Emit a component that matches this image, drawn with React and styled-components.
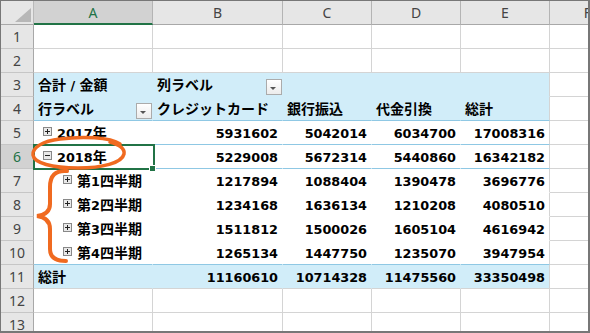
import React from "react";
import styled, { createGlobalStyle } from "styled-components";

const GREEN = "#217346";
const PIVOT = "#d1edf9";
const PIVOT_LINE = "#8fc8e4";
const GRID = "#d4d4d4";
const MARK = "#f06a20";

const GlobalStyle = createGlobalStyle`
  html, body {
    margin: 0;
    padding: 0;
    background: #fff;
  }
`;

const Frame = styled.div`
  position: relative;
  width: 590px;
  height: 333px;
  box-sizing: border-box;
  border: solid #777;
  border-width: 1px 2px 2px 1px;
  overflow: hidden;
  font-family: "Noto Sans CJK JP", sans-serif;
`;

const Sheet = styled.div`
  display: grid;
  grid-template-columns: 33px 119px 130px 89px 89px 89px 76px;
  grid-auto-rows: 24px;
`;

const Corner = styled.div`
  position: relative;
  box-sizing: border-box;
  background: #e6e6e6;
  border-right: 1px solid #b9b9b9;
  border-bottom: 1px solid #a8a8a8;

  &::after {
    content: "";
    position: absolute;
    right: 2px;
    bottom: 2px;
    border-left: 16px solid transparent;
    border-bottom: 14px solid #b7b7b7;
  }
`;

const ColHead = styled.div`
  display: flex;
  align-items: center;
  justify-content: center;
  box-sizing: border-box;
  background: ${({ $sel }) => ($sel ? "#d2d2d2" : "#e6e6e6")};
  color: ${({ $sel }) => ($sel ? GREEN : "#444")};
  border-right: 1px solid #b4b4b4;
  border-bottom: ${({ $sel }) => ($sel ? `2px solid ${GREEN}` : "1px solid #a8a8a8")};
  font: 14px "Noto Sans", sans-serif;
`;

const RowHead = styled.div`
  display: flex;
  align-items: center;
  justify-content: center;
  box-sizing: border-box;
  background: ${({ $sel }) => ($sel ? "#d2d2d2" : "#e6e6e6")};
  color: ${({ $sel }) => ($sel ? GREEN : "#444")};
  border-right: 1px solid #a8a8a8;
  border-bottom: 1px solid #c6c6c6;
  font: 14px "Noto Sans", sans-serif;
`;

const bgOf = (tone) => (tone === "pivot" ? PIVOT : "#fff");

const Cell = styled.div`
  display: flex;
  align-items: center;
  justify-content: ${({ $align }) =>
    $align === "right" ? "flex-end" : $align === "split" ? "space-between" : "flex-start"};
  gap: 5px;
  box-sizing: border-box;
  padding: 0 ${({ $padR = 4 }) => $padR}px 2px ${({ $indent = 4 }) => $indent}px;
  background: ${({ $tone }) => bgOf($tone)};
  border-right: 1px solid
    ${({ $tone, $edge }) => ($tone === "grid" || $edge ? GRID : bgOf($tone))};
  border-bottom: 1px solid
    ${({ $rule, $tone }) =>
      $rule === "blue" ? PIVOT_LINE : $rule === "grid" ? GRID : bgOf($tone)};
  color: #000;
  font-size: 14px;
  font-weight: 700;
  white-space: nowrap;
`;

const Text = styled.span`
  font-family: "Noto Sans CJK JP", sans-serif;
`;

const Latin = styled.span`
  font-family: "DejaVu Sans", sans-serif;
  font-size: 12.8px;
`;

const FilterButton = styled.span`
  flex: none;
  align-self: flex-end;
  margin-bottom: -1px;
  width: 16px;
  height: 16px;
  box-sizing: border-box;
  border: 1px solid #ababab;
  background: linear-gradient(#ffffff, #ececec);

  svg {
    display: block;
  }
`;

const ToggleSvg = styled.svg`
  flex: none;
  display: block;
`;

const Selection = styled.div`
  position: absolute;
  left: 32px;
  top: 143px;
  width: 122px;
  height: 26px;
  box-sizing: border-box;
  border: 2px solid ${GREEN};
  pointer-events: none;
`;

const FillHandle = styled.div`
  position: absolute;
  right: -3px;
  bottom: -4px;
  width: 7px;
  height: 7px;
  box-sizing: border-box;
  background: ${GREEN};
  border: 1px solid #fff;
`;

const Annotation = styled.svg`
  position: absolute;
  left: -1px;
  top: -1px;
  width: 590px;
  height: 333px;
  pointer-events: none;
`;

const COLS = ["A", "B", "C", "D", "E", "F"];

const ROWS = [
  { n: 1 },
  { n: 2 },
  {
    n: 3,
    kind: "head",
    rule: "none",
    cells: [{ text: "合計 / 金額" }, { text: "列ラベル", filter: true }, {}, {}, {}],
  },
  {
    n: 4,
    kind: "head",
    rule: "blue",
    cells: [
      { text: "行ラベル", filter: true },
      { text: "クレジットカード" },
      { text: "銀行振込" },
      { text: "代金引換" },
      { text: "総計" },
    ],
  },
  { n: 5, kind: "body", rule: "blue", label: "2017年", level: 0, values: [5931602, 5042014, 6034700, 17008316] },
  { n: 6, kind: "body", rule: "blue", label: "2018年", level: 0, open: true, values: [5229008, 5672314, 5440860, 16342182] },
  { n: 7, kind: "body", rule: "none", label: "第1四半期", level: 1, values: [1217894, 1088404, 1390478, 3696776] },
  { n: 8, kind: "body", rule: "none", label: "第2四半期", level: 1, values: [1234168, 1636134, 1210208, 4080510] },
  { n: 9, kind: "body", rule: "none", label: "第3四半期", level: 1, values: [1511812, 1500026, 1605104, 4616942] },
  { n: 10, kind: "body", rule: "blue", label: "第4四半期", level: 1, values: [1265134, 1447750, 1235070, 3947954] },
  { n: 11, kind: "total", rule: "grid", label: "総計", values: [11160610, 10714328, 11475560, 33350498] },
  { n: 12 },
  { n: 13 },
];

// digits and ascii go in the latin face, kana/kanji stay in the CJK face
const Label = ({ text }) => (
  <Text>
    {text
      .split(/([\x20-\x7e]+)/)
      .filter(Boolean)
      .map((part, i) =>
        /^[\x20-\x7e]+$/.test(part) ? <Latin key={i}>{part}</Latin> : <span key={i}>{part}</span>
      )}
  </Text>
);

const Toggle = ({ open }) => (
  <ToggleSvg width="9" height="9" viewBox="0 0 9 9" shapeRendering="crispEdges">
    <rect x="0.5" y="0.5" width="8" height="8" fill="#e9e9e9" stroke="#888" />
    <rect x="2" y="4" width="5" height="1" fill="#222" />
    {!open && <rect x="4" y="2" width="1" height="5" fill="#222" />}
  </ToggleSvg>
);

const Filter = () => (
  <FilterButton>
    <svg width="14" height="14" viewBox="0 0 14 14">
      <polygon points="3,7 9,7 6,10" fill="#555" />
    </svg>
  </FilterButton>
);

const SheetRow = ({ row }) => {
  const head = <RowHead $sel={row.n === 6}>{row.n}</RowHead>;
  const tail = <Cell $tone="grid" $rule="grid" />;

  if (!row.kind) {
    return (
      <>
        {head}
        {[0, 1, 2, 3, 4].map((i) => (
          <Cell key={i} $tone="grid" $rule="grid" />
        ))}
        {tail}
      </>
    );
  }

  if (row.kind === "head") {
    return (
      <>
        {head}
        {row.cells.map((c, i) => (
          <Cell
            key={i}
            $tone="pivot"
            $rule={row.rule}
            $edge={i === 4}
            $align={c.filter ? "split" : "left"}
            $padR={c.filter ? 0 : 4}
          >
            {c.text && <Label text={c.text} />}
            {c.filter && <Filter />}
          </Cell>
        ))}
        {tail}
      </>
    );
  }

  const tone = row.kind === "total" ? "pivot" : "body";
  return (
    <>
      {head}
      <Cell $tone={tone} $rule={row.rule} $indent={row.kind === "body" ? 9 + row.level * 20 : 4}>
        {row.kind === "body" && <Toggle open={row.open} />}
        <Label text={row.label} />
      </Cell>
      {row.values.map((v, i) => (
        <Cell key={i} $tone={tone} $rule={row.rule} $edge={i === 3} $align="right">
          <Text>
            <Latin>{v}</Latin>
          </Text>
        </Cell>
      ))}
      {tail}
    </>
  );
};

export default function App() {
  return (
    <>
      <GlobalStyle />
      <Frame>
        <Sheet>
          <Corner />
          {COLS.map((c) => (
            <ColHead key={c} $sel={c === "A"}>
              {c}
            </ColHead>
          ))}
          {ROWS.map((row) => (
            <SheetRow key={row.n} row={row} />
          ))}
        </Sheet>
        <Selection>
          <FillHandle />
        </Selection>
        <Annotation viewBox="0 0 590 333">
          <path
            d="M 120 144 C 110 137, 82 136, 60 139 C 42 141, 32 148, 33 155 C 34 163, 52 168, 78 168 C 102 168, 122 163, 124 154 C 125 149, 120 145, 110 142"
            fill="none"
            stroke={MARK}
            strokeWidth="3.5"
            strokeLinecap="round"
          />
          <path
            d="M 67 171 C 55 170, 50 176, 50 187 L 50 204 C 50 211, 45 215, 37 216 C 45 217, 50 221, 50 229 L 50 249 C 50 257, 55 261, 66 261"
            fill="none"
            stroke={MARK}
            strokeWidth="4"
            strokeLinecap="round"
          />
        </Annotation>
      </Frame>
    </>
  );
}
